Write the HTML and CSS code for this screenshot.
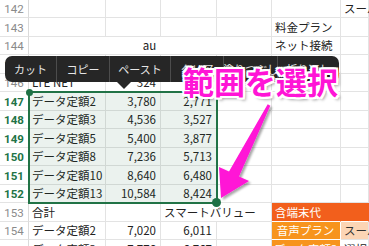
FILE: index.html
```html
<!DOCTYPE html>
<html lang="ja">
<head>
    <meta charset="UTF-8">
    <meta name="viewport" content="width=device-width, initial-scale=1.0">
    <title>範囲を選択</title>
    <link rel="stylesheet" href="styles.css">
</head>
<body>
    <div class="screen">
        <div class="sheet">
            <div class="rh">142</div><div class="c"></div><div class="c"></div><div class="c"></div><div class="c"></div><div class="c"></div><div class="c">スーパー</div>
            <div class="rh">143</div><div class="c"></div><div class="c"></div><div class="c"></div><div class="c"></div><div class="c">料金プラン</div><div class="c"></div>
            <div class="rh">144</div><div class="c merge center">au</div><div class="c">ネット接続</div><div class="c"></div>
            <div class="rh">145</div><div class="c"></div><div class="c"></div><div class="c"></div><div class="c"></div><div class="c"></div><div class="c"></div>
            <div class="rh">146</div><div class="c">LTE NET</div><div class="c num">324</div><div class="c num"></div><div class="c"></div><div class="c"></div><div class="c"></div>

            <div class="rh sel">147</div><div class="c">データ定額2</div><div class="c num">3,780</div><div class="c num">2,771</div><div class="c"></div><div class="c"></div><div class="c"></div>
            <div class="rh sel">148</div><div class="c">データ定額3</div><div class="c num">4,536</div><div class="c num">3,527</div><div class="c"></div><div class="c"></div><div class="c"></div>
            <div class="rh sel">149</div><div class="c">データ定額5</div><div class="c num">5,400</div><div class="c num">3,877</div><div class="c"></div><div class="c"></div><div class="c"></div>
            <div class="rh sel">150</div><div class="c">データ定額8</div><div class="c num">7,236</div><div class="c num">5,713</div><div class="c"></div><div class="c"></div><div class="c"></div>
            <div class="rh sel">151</div><div class="c">データ定額10</div><div class="c num">8,640</div><div class="c num">6,480</div><div class="c"></div><div class="c"></div><div class="c"></div>
            <div class="rh sel">152</div><div class="c">データ定額13</div><div class="c num">10,584</div><div class="c num">8,424</div><div class="c"></div><div class="c"></div><div class="c"></div>

            <div class="rh">153</div><div class="c">合計</div><div class="c"></div><div class="c open">スマートバリュー</div><div class="c"></div><div class="c fill-red">含端末代</div><div class="c fill-red"></div>
            <div class="rh">154</div><div class="c">データ定額2</div><div class="c num">7,020</div><div class="c num">6,011</div><div class="c"></div><div class="c fill-orange center">音声プラン</div><div class="c fill-peach">スーパー</div>
            <div class="rh">155</div><div class="c">データ定額3</div><div class="c num">7,776</div><div class="c num">6,767</div><div class="c"></div><div class="c fill-orange center">データ定額3</div><div class="c">選択</div>
        </div>

        <div class="selection"></div>

        <div class="toolbar">
            <span class="tool w52">カット</span>
            <span class="tool w53">コピー</span>
            <span class="tool w61">ペースト</span>
            <span class="tool w53">クリア</span>
            <span class="tool w54">塗りつぶし</span>
            <span class="tool">折り返し</span>
        </div>

        <div class="callout">範囲を選択</div>

        <svg class="arrow" width="369" height="246" viewBox="0 0 369 246">
            <defs>
                <filter id="shade" x="-20%" y="-20%" width="140%" height="140%">
                    <feDropShadow dx="2" dy="2" stdDeviation="1.2" flood-color="#000" flood-opacity="0.35"/>
                </filter>
            </defs>
            <polygon filter="url(#shade)" fill="#ff14d6"
                points="221,198 219,167 229,171.5 267.7,104.3 270.3,105.7 239,176.5 249,181"/>
        </svg>
    </div>
</body>
</html>
```

FILE: styles.css
```css
body {
    margin: 0;
    background-color: #fff;
    font-family: "Noto Sans CJK JP", "Noto Sans", sans-serif;
    overflow: hidden;
}

.screen {
    position: relative;
    width: 369px;
    height: 246px;
    overflow: hidden;
}

.sheet {
    display: grid;
    grid-template-columns: 29px 77px 55px 56px 55px 69px 28px;
    grid-auto-rows: 18.5px;
    margin-top: -0.5px;
    font-size: 11.5px;
    color: #222;
}

.c {
    display: flex;
    align-items: center;
    padding: 1px 4px 0 3px;
    border-right: 1px solid #e3e3e3;
    border-bottom: 1px solid #e3e3e3;
    white-space: nowrap;
    line-height: 1;
    box-sizing: border-box;
    min-width: 0;
}

.num {
    justify-content: flex-end;
}

.center {
    justify-content: center;
}

.merge {
    grid-column: span 4;
}

.open {
    border-right: none;
    overflow: visible;
}

.rh {
    display: flex;
    align-items: center;
    justify-content: center;
    padding-top: 2px;
    font-family: Roboto, sans-serif;
    font-size: 11.5px;
    color: #8a8a8a;
    border-right: 1px solid #dadada;
    border-bottom: 1px solid #e3e3e3;
    box-sizing: border-box;
}

.rh.sel {
    color: #217346;
    font-weight: bold;
}

.fill-red {
    background-color: #f25f1c;
    color: #fff;
    border-right-color: #f25f1c;
    border-bottom-color: #fff;
}

.fill-orange {
    background-color: #f7941d;
    color: #fff;
    border-right-color: #fff;
    border-bottom-color: #fff;
}

.fill-peach {
    background-color: #fcd5b5;
    color: #333;
}

/* selected range A147:C152 */
.selection {
    position: absolute;
    left: 28px;
    top: 91px;
    width: 190px;
    height: 113px;
    box-sizing: border-box;
    border: 2px solid #217346;
    background-color: rgba(33, 115, 70, 0.09);
}

.selection::before,
.selection::after {
    content: "";
    position: absolute;
    border-radius: 50%;
    background-color: #1e7145;
}

.selection::before {
    left: -4px;
    top: -4px;
    width: 7px;
    height: 7px;
}

.selection::after {
    right: -5px;
    bottom: -5px;
    width: 9px;
    height: 9px;
}

.toolbar {
    position: absolute;
    left: 5px;
    top: 56px;
    width: 334px;
    height: 26px;
    display: flex;
    background-color: #262626;
    border-radius: 7px;
    font-size: 11px;
    color: #e6e6e6;
}

.toolbar::after {
    content: "";
    position: absolute;
    left: 112px;
    bottom: -7px;
    border-left: 7px solid transparent;
    border-right: 7px solid transparent;
    border-top: 7px solid #262626;
}

.tool {
    display: flex;
    align-items: center;
    justify-content: center;
    border-right: 1px solid #4c4c4c;
    box-sizing: border-box;
    white-space: nowrap;
    overflow: hidden;
}

.tool:last-child {
    border-right: none;
    flex-grow: 1;
}

.w52 { width: 52px; }
.w53 { width: 53px; }
.w54 { width: 54px; }
.w61 { width: 61px; }

.callout {
    position: absolute;
    left: 183px;
    top: 65px;
    font-size: 31px;
    font-weight: bold;
    line-height: 1;
    color: #ff14d6;
    letter-spacing: 0;
    text-shadow:
        2px 0 0 #fff, -2px 0 0 #fff, 0 2px 0 #fff, 0 -2px 0 #fff,
        2px 2px 0 #fff, -2px -2px 0 #fff, 2px -2px 0 #fff, -2px 2px 0 #fff,
        3px 3px 3px rgba(0, 0, 0, 0.35);
}

.arrow {
    position: absolute;
    left: 0;
    top: 0;
    pointer-events: none;
}
```
